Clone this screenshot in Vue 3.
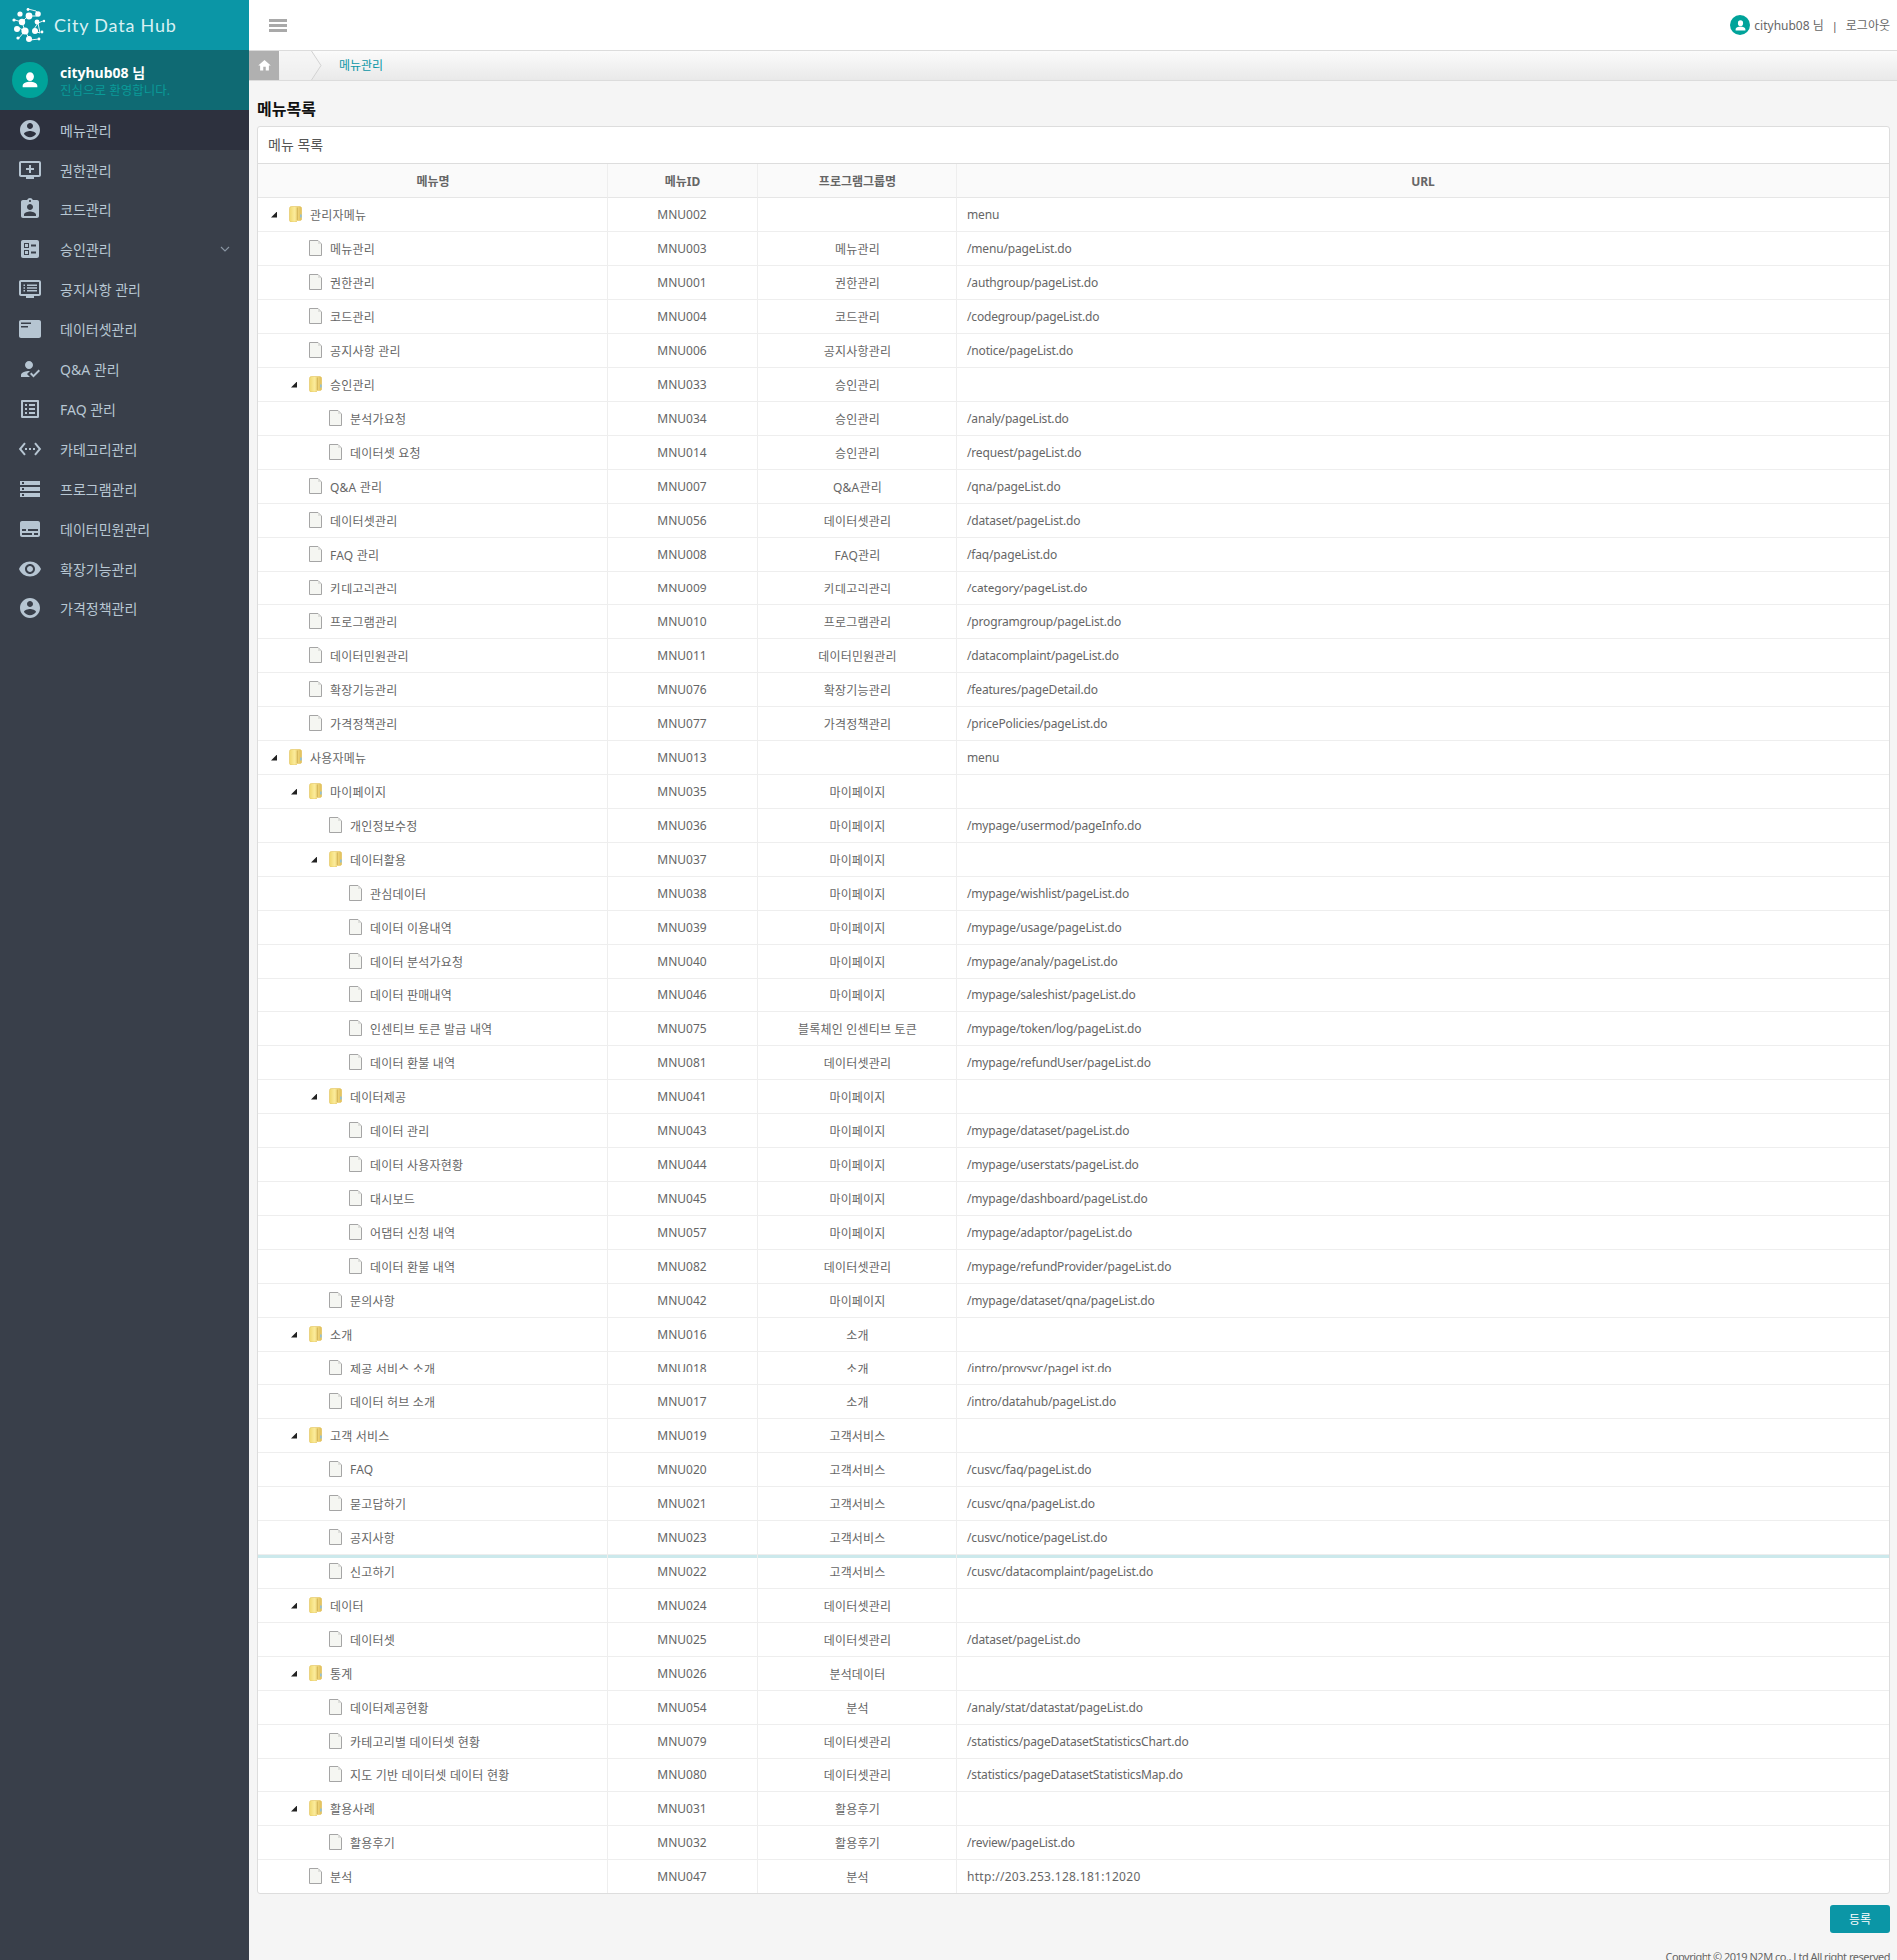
<template>
  <div class="layout">
    <!-- 사이드바 -->
    <aside class="sidebar">
      <div class="logo">
        <svg class="logo-mark" viewBox="0 0 36 36" width="36" height="36">
          <g stroke="#fff" stroke-width="1" fill="none" opacity=".9">
            <path d="M17 2 L25 4 L28 8 M4 13 L11 15 L17 9 L26 9 M8 21 L14 24 L19 33 L28 32 M23 22 L27 16 L32 14 M27 16 L29 26 L23 24 M11 15 L14 24 M7 32 L14 24" />
          </g>
          <g fill="#fff">
            <circle cx="17" cy="2.5" r="1.4" /><circle cx="9" cy="7" r="2.6" /><circle cx="18" cy="9" r="3.4" />
            <circle cx="27" cy="7" r="2.8" /><circle cx="3" cy="13" r="1.6" /><circle cx="11" cy="15" r="3.2" />
            <circle cx="26" cy="15" r="2.4" /><circle cx="33" cy="14" r="1.2" /><circle cx="6" cy="22" r="3" />
            <circle cx="14" cy="24" r="3.6" /><circle cx="24" cy="24" r="3" /><circle cx="31" cy="25" r="1.4" />
            <circle cx="7" cy="31" r="1.6" /><circle cx="18" cy="32" r="3" /><circle cx="28" cy="32" r="1.4" />
          </g>
        </svg>
        <span class="logo-text">City Data Hub</span>
      </div>
      <div class="user-panel">
        <span class="avatar">
          <svg viewBox="0 0 24 24" width="22" height="22"><path fill="#fff" d="M12 3.500a4.300 4.800 0 1 1 0 9.600a4.300 4.800 0 0 1 0-9.600zM4 20v-1.800c0-2.500 4.500-4.200 8-4.200s8 1.700 8 4.200V20z" /></svg>
        </span>
        <div class="user-info">
          <div class="user-name">cityhub08 님</div>
          <div class="user-welcome">진심으로 환영합니다.</div>
        </div>
      </div>
      <ul class="menu">
        <li v-for="(m, i) in menus" :key="m.label" class="menu-item" :class="{ active: i === 0 }">
          <svg class="menu-icon" viewBox="0 0 24 24" width="24" height="24"><path fill-rule="evenodd" :d="m.icon" /></svg>
          <span class="menu-label">{{ m.label }}</span>
          <svg v-if="m.sub" class="menu-arrow" viewBox="0 0 10 6" width="10" height="6"><path d="M1 1l4 4 4-4" fill="none" stroke="#8a96a3" stroke-width="1.100" /></svg>
        </li>
      </ul>
    </aside>

    <div class="main">
      <header class="topbar">
        <div class="burger"><i></i><i></i><i></i></div>
        <div class="top-user">
          <span class="avatar small">
            <svg viewBox="0 0 24 24" width="13" height="13"><path fill="#fff" d="M12 2.500a4.800 5.300 0 1 1 0 10.600a4.800 5.300 0 0 1 0-10.600zM3 21v-2.500c0-2.800 5-4.500 9-4.500s9 1.700 9 4.500V21z" /></svg>
          </span>
          <span class="top-name">cityhub08 님</span>
          <span class="top-sep">|</span>
          <span class="top-logout">로그아웃</span>
        </div>
      </header>

      <nav class="crumb">
        <span class="crumb-home">
          <svg viewBox="0 0 24 24" width="15" height="15"><path fill="#fff" d="M10 20v-6h4v6h5v-8h3L12 3 2 12h3v8z" /></svg>
        </span>
        <svg class="crumb-arrow" viewBox="0 0 42 29" width="42" height="29">
          <path fill="#f2f2f2" d="M0 0h32l9 14.500-9 14.500H0z" opacity=".55" />
          <path fill="none" stroke="#d2d2d2" d="M31.500 0l9.500 14.500-9.500 14.500" />
        </svg>
        <span class="crumb-current">메뉴관리</span>
      </nav>

      <section class="content">
        <h2 class="page-title">메뉴목록</h2>
        <div class="card">
          <div class="card-title">메뉴 목록</div>
          <table class="tree-table">
            <colgroup>
              <col style="width: 351px" />
              <col style="width: 150px" />
              <col style="width: 200px" />
              <col />
            </colgroup>
            <thead>
              <tr>
                <th>메뉴명</th>
                <th>메뉴ID</th>
                <th>프로그램그룹명</th>
                <th>URL</th>
              </tr>
            </thead>
            <tbody>
              <tr v-for="r in rows" :key="r.id + r.name" :class="{ hover: r.id === 'MNU022' }">
                <td>
                  <div class="tree-cell" :style="{ paddingLeft: 31 + r.level * 20 + 'px' }">
                    <template v-if="r.folder">
                      <i class="toggler"></i>
                      <svg class="node-icon" viewBox="0 0 13 16" width="13" height="16">
                        <defs>
                          <linearGradient id="fold" x1="0" x2="1" y1="0" y2="0">
                            <stop offset="0" stop-color="#f0d86e" />
                            <stop offset=".4" stop-color="#fbeb9a" />
                            <stop offset="1" stop-color="#e0bc55" />
                          </linearGradient>
                        </defs>
                        <path fill="url(#fold)" stroke="#e2c25e" stroke-width=".6" d="M.5 2.500C.5 1 1.500.5 2.500.5h7.500C11.500.5 12.700 1 12.700 2.500V13c0 1-1 1.500-2 1.500H8.500L7 16H2.500c-1.200 0-2-.6-2-2z" />
                        <path fill="#cfae50" d="M7.800 1.500h.9V14h-.9z" />
                        <path fill="#8fc0d8" d="M11 8.500h1.700v3H11z" />
                      </svg>
                    </template>
                    <svg v-else class="node-icon" viewBox="0 0 13 16" width="13" height="16">
                      <path fill="#f5f6f2" stroke="#a5a5a5" d="M.5.5h8.500l3.500 3.500v11.500H.5z" />
                      <path fill="#dfe0dc" d="M9 1l3 3H9z" />
                    </svg>
                    <span class="node-name">{{ r.name }}</span>
                  </div>
                </td>
                <td class="center id-cell">{{ r.id }}</td>
                <td class="center group">{{ r.group }}</td>
                <td class="url" :class="{ ext: r.url.startsWith('http') }">{{ r.url }}</td>
              </tr>
            </tbody>
          </table>
        </div>
        <div class="actions">
          <button class="btn" type="button">등록</button>
        </div>
        <footer class="copyright">Copyright © 2019 N2M co., Ltd All right reserved</footer>
      </section>
    </div>
  </div>
</template>

<script setup>
const person = 'M12 2C6.48 2 2 6.48 2 12s4.48 10 10 10 10-4.48 10-10S17.52 2 12 2zm0 3c1.66 0 3 1.34 3 3s-1.34 3-3 3-3-1.34-3-3 1.34-3 3-3zm0 14.200c-2.500 0-4.710-1.280-6-3.220.03-1.990 4-3.080 6-3.080 1.990 0 5.970 1.090 6 3.080-1.290 1.940-3.500 3.220-6 3.220z'

const menus = [
  { label: '메뉴관리', icon: person },
  { label: '권한관리', icon: 'M21 3H3c-1.110 0-2 .89-2 2v12c0 1.100.89 2 2 2h5v2h8v-2h5c1.100 0 1.990-.9 1.990-2L23 5c0-1.110-.9-2-2-2zm0 14H3V5h18v12zm-5-7v2h-3v3h-2v-3H8v-2h3V7h2v3h3z' },
  { label: '코드관리', icon: 'M19 3h-4.180C14.400 1.840 13.300 1 12 1c-1.300 0-2.400.84-2.820 2H5c-1.100 0-2 .9-2 2v14c0 1.100.9 2 2 2h14c1.100 0 2-.9 2-2V5c0-1.100-.9-2-2-2zm-7 0c.55 0 1 .45 1 1s-.45 1-1 1-1-.45-1-1 .45-1 1-1zm0 4c1.660 0 3 1.340 3 3s-1.340 3-3 3-3-1.340-3-3 1.340-3 3-3zm6 12H6v-1.400c0-2 4-3.100 6-3.100s6 1.100 6 3.100V19z' },
  { label: '승인관리', sub: true, icon: 'M19 3H5c-1.100 0-2 .9-2 2v14c0 1.100.9 2 2 2h14c1.100 0 2-.9 2-2V5c0-1.100-.9-2-2-2zM6 6v5h5V6zm1 1h3v3H7zM6 13v5h5v-5zm1 1h3v3H7zM13 7.500v2h5v-2zM13 14.500v2h5v-2z' },
  { label: '공지사항 관리', icon: 'M21 3H3c-1.100 0-2 .9-2 2v12c0 1.100.9 2 2 2h5v2h8v-2h5c1.100 0 2-.9 2-2V5c0-1.100-.9-2-2-2zM3 5h18v12H3zM5.500 7.500v1.500h1.500v-1.500zM9 7.500v1.500h10v-1.500zM5.500 10.300v1.500h1.500v-1.500zM9 10.300v1.500h10v-1.500zM5.500 13.100v1.500h1.500v-1.500zM9 13.100v1.500h10v-1.500z' },
  { label: '데이터셋관리', icon: 'M3 3h18c1.100 0 2 .9 2 2v14c0 1.100-.9 2-2 2H3c-1.100 0-2-.9-2-2V5c0-1.100.9-2 2-2zM3 5.500v1.500h10V5.500zM3 9v1.500h7V9z' },
  { label: 'Q&A 관리', icon: 'M9 17l3-2.940c-.39-.04-.68-.06-1-.06-2.670 0-8 1.340-8 4v2h9l-3-3zm2-5c2.210 0 4-1.790 4-4s-1.790-4-4-4-4 1.790-4 4 1.790 4 4 4zM15.470 20.500L12 17l1.400-1.410 2.070 2.080 5.130-5.170 1.400 1.410z' },
  { label: 'FAQ 관리', icon: 'M19 5v14H5V5h14m1.100-2H3.900c-.5 0-.9.4-.9.9v16.200c0 .4.4.9.9.9h16.200c.4 0 .9-.5.9-.9V3.900c0-.5-.5-.9-.9-.9zM11 7h6v2h-6V7zm0 4h6v2h-6v-2zm0 4h6v2h-6zM7 7h2v2H7zm0 4h2v2H7zm0 4h2v2H7z' },
  { label: '카테고리관리', icon: 'M7.770 6.760L6.230 5.480.82 12l5.410 6.520 1.540-1.280L3.420 12l4.350-5.240zM7 13h2v-2H7v2zm10-2h-2v2h2v-2zm-6 2h2v-2h-2v2zm6.770-7.520l-1.540 1.280L20.580 12l-4.350 5.240 1.540 1.280L23.180 12l-5.410-6.520z' },
  { label: '프로그램관리', icon: 'M2 20h20v-4H2v4zm2-3h2v2H4v-2zM2 4v4h20V4H2zm4 3H4V5h2v2zm-4 7h20v-4H2v4zm2-3h2v2H4v-2z' },
  { label: '데이터민원관리', icon: 'M20 4H4c-1.100 0-2 .9-2 2v12c0 1.100.9 2 2 2h16c1.100 0 2-.9 2-2V6c0-1.100-.9-2-2-2zM4 12h4v2H4v-2zm10 6H4v-2h10v2zm6 0h-4v-2h4v2zm0-4H10v-2h10v2z' },
  { label: '확장기능관리', icon: 'M12 4.500C7 4.500 2.730 7.610 1 12c1.730 4.390 6 7.500 11 7.500s9.270-3.110 11-7.500c-1.730-4.390-6-7.500-11-7.500zM12 17c-2.760 0-5-2.240-5-5s2.240-5 5-5 5 2.240 5 5-2.240 5-5 5zm0-8c-1.660 0-3 1.340-3 3s1.340 3 3 3 3-1.340 3-3-1.340-3-3-3z' },
  { label: '가격정책관리', icon: person }
]

// level, folder, name, id, group, url
const raw = [
  [0, 1, '관리자메뉴', '002', '', 'menu'],
  [1, 0, '메뉴관리', '003', '메뉴관리', '/menu/pageList.do'],
  [1, 0, '권한관리', '001', '권한관리', '/authgroup/pageList.do'],
  [1, 0, '코드관리', '004', '코드관리', '/codegroup/pageList.do'],
  [1, 0, '공지사항 관리', '006', '공지사항관리', '/notice/pageList.do'],
  [1, 1, '승인관리', '033', '승인관리', ''],
  [2, 0, '분석가요청', '034', '승인관리', '/analy/pageList.do'],
  [2, 0, '데이터셋 요청', '014', '승인관리', '/request/pageList.do'],
  [1, 0, 'Q&A 관리', '007', 'Q&A관리', '/qna/pageList.do'],
  [1, 0, '데이터셋관리', '056', '데이터셋관리', '/dataset/pageList.do'],
  [1, 0, 'FAQ 관리', '008', 'FAQ관리', '/faq/pageList.do'],
  [1, 0, '카테고리관리', '009', '카테고리관리', '/category/pageList.do'],
  [1, 0, '프로그램관리', '010', '프로그램관리', '/programgroup/pageList.do'],
  [1, 0, '데이터민원관리', '011', '데이터민원관리', '/datacomplaint/pageList.do'],
  [1, 0, '확장기능관리', '076', '확장기능관리', '/features/pageDetail.do'],
  [1, 0, '가격정책관리', '077', '가격정책관리', '/pricePolicies/pageList.do'],
  [0, 1, '사용자메뉴', '013', '', 'menu'],
  [1, 1, '마이페이지', '035', '마이페이지', ''],
  [2, 0, '개인정보수정', '036', '마이페이지', '/mypage/usermod/pageInfo.do'],
  [2, 1, '데이터활용', '037', '마이페이지', ''],
  [3, 0, '관심데이터', '038', '마이페이지', '/mypage/wishlist/pageList.do'],
  [3, 0, '데이터 이용내역', '039', '마이페이지', '/mypage/usage/pageList.do'],
  [3, 0, '데이터 분석가요청', '040', '마이페이지', '/mypage/analy/pageList.do'],
  [3, 0, '데이터 판매내역', '046', '마이페이지', '/mypage/saleshist/pageList.do'],
  [3, 0, '인센티브 토큰 발급 내역', '075', '블록체인 인센티브 토큰', '/mypage/token/log/pageList.do'],
  [3, 0, '데이터 환불 내역', '081', '데이터셋관리', '/mypage/refundUser/pageList.do'],
  [2, 1, '데이터제공', '041', '마이페이지', ''],
  [3, 0, '데이터 관리', '043', '마이페이지', '/mypage/dataset/pageList.do'],
  [3, 0, '데이터 사용자현황', '044', '마이페이지', '/mypage/userstats/pageList.do'],
  [3, 0, '대시보드', '045', '마이페이지', '/mypage/dashboard/pageList.do'],
  [3, 0, '어댑터 신청 내역', '057', '마이페이지', '/mypage/adaptor/pageList.do'],
  [3, 0, '데이터 환불 내역', '082', '데이터셋관리', '/mypage/refundProvider/pageList.do'],
  [2, 0, '문의사항', '042', '마이페이지', '/mypage/dataset/qna/pageList.do'],
  [1, 1, '소개', '016', '소개', ''],
  [2, 0, '제공 서비스 소개', '018', '소개', '/intro/provsvc/pageList.do'],
  [2, 0, '데이터 허브 소개', '017', '소개', '/intro/datahub/pageList.do'],
  [1, 1, '고객 서비스', '019', '고객서비스', ''],
  [2, 0, 'FAQ', '020', '고객서비스', '/cusvc/faq/pageList.do'],
  [2, 0, '묻고답하기', '021', '고객서비스', '/cusvc/qna/pageList.do'],
  [2, 0, '공지사항', '023', '고객서비스', '/cusvc/notice/pageList.do'],
  [2, 0, '신고하기', '022', '고객서비스', '/cusvc/datacomplaint/pageList.do'],
  [1, 1, '데이터', '024', '데이터셋관리', ''],
  [2, 0, '데이터셋', '025', '데이터셋관리', '/dataset/pageList.do'],
  [1, 1, '통계', '026', '분석데이터', ''],
  [2, 0, '데이터제공현황', '054', '분석', '/analy/stat/datastat/pageList.do'],
  [2, 0, '카테고리별 데이터셋 현황', '079', '데이터셋관리', '/statistics/pageDatasetStatisticsChart.do'],
  [2, 0, '지도 기반 데이터셋 데이터 현황', '080', '데이터셋관리', '/statistics/pageDatasetStatisticsMap.do'],
  [1, 1, '활용사례', '031', '활용후기', ''],
  [2, 0, '활용후기', '032', '활용후기', '/review/pageList.do'],
  [1, 0, '분석', '047', '분석', 'http://203.253.128.181:12020']
]

const rows = raw.map(([level, folder, name, id, group, url]) => ({
  level,
  folder: !!folder,
  name,
  id: 'MNU' + id,
  group,
  url
}))
</script>

<style scoped>
.layout {
  display: flex;
  height: 1965px;
  overflow: hidden;
  font-family: "Noto Sans", "Noto Sans CJK KR", sans-serif;
  font-size: 12px;
  color: #666;
}

/* sidebar */
.sidebar {
  width: 250px;
  flex: none;
  background: #393f4a;
}
.logo {
  height: 50px;
  display: flex;
  align-items: center;
  padding-left: 11px;
  gap: 7px;
  background: #0b96a6;
  box-sizing: border-box;
}
.logo-text {
  font-family: "Lato", sans-serif;
  font-size: 18px;
  letter-spacing: 0.8px;
  color: #d8f0f3;
}
.user-panel {
  height: 60px;
  display: flex;
  align-items: center;
  padding-left: 12px;
  gap: 12px;
  background: #0f6a73;
}
.avatar {
  width: 36px;
  height: 36px;
  border-radius: 50%;
  background: #00a39a;
  display: flex;
  align-items: center;
  justify-content: center;
  flex: none;
}
.avatar.small {
  width: 20px;
  height: 20px;
}
.user-name {
  font-size: 14px;
  font-weight: 700;
  color: #fff;
  line-height: 20px;
}
.user-welcome {
  font-size: 12.500px;
  color: #0a9a98;
  line-height: 15px;
}
.menu {
  list-style: none;
  margin: 0;
  padding: 0;
}
.menu-item {
  height: 40px;
  display: flex;
  align-items: center;
  padding-left: 18px;
  padding-right: 19px;
  gap: 18px;
  font-size: 14px;
  color: #b8c7d3;
}
.menu-item.active {
  background: #2d313e;
}
.menu-icon {
  flex: none;
  fill: #b6c5d2;
}
.menu-label {
  flex: 1;
}

/* top */
.main {
  flex: 1;
  min-width: 0;
  display: flex;
  flex-direction: column;
  background: #f5f5f5;
}
.topbar {
  height: 50px;
  flex: none;
  background: #fff;
  display: flex;
  align-items: center;
  justify-content: space-between;
  padding: 0 7px 0 20px;
  box-sizing: border-box;
}
.burger i {
  display: block;
  width: 18px;
  height: 3px;
  margin: 2px 0;
  background: #a9a9a9;
}
.top-user {
  display: flex;
  align-items: center;
  color: #666;
}
.top-name {
  margin-left: 4px;
}
.top-sep {
  margin: 0 8px 0 8px;
  color: #555;
  font-size: 11px;
}
.crumb {
  height: 31px;
  flex: none;
  display: flex;
  align-items: stretch;
  box-sizing: border-box;
  border-top: 1px solid #dcdcdc;
  border-bottom: 1px solid #dcdcdc;
  background: linear-gradient(#fbfbfb, #e9e9e9);
}
.crumb-home {
  width: 30px;
  background: #b0b0b0;
  display: flex;
  align-items: center;
  justify-content: center;
}
.crumb-arrow {
  margin-left: 1px;
}
.crumb-current {
  margin-left: 17px;
  line-height: 29px;
  color: #0b96a6;
}

/* content */
.content {
  flex: 1;
  padding: 0 7px 0 8px;
}
.page-title {
  margin: 18px 0 0;
  height: 27px;
  font-size: 16px;
  font-weight: 700;
  line-height: 20px;
  color: #111;
}
.card {
  background: #fff;
  border: 1px solid #ddd;
  border-radius: 3px;
}
.card-title {
  height: 36px;
  line-height: 36px;
  padding-left: 10px;
  font-size: 14px;
  color: #555;
  border-bottom: 1px solid #ddd;
}
.tree-table {
  width: 100%;
  table-layout: fixed;
  border-collapse: separate;
  border-spacing: 0;
}
.tree-table th {
  height: 34px;
  padding: 0;
  background: #fafafa;
  font-weight: 700;
  font-size: 12px;
  color: #666;
  border-right: 1px solid #eee;
  border-bottom: 1px solid #e6e6e6;
}
.tree-table td {
  height: 33px;
  padding: 0;
  border-right: 1px solid #eee;
  border-bottom: 1px solid #eee;
  white-space: nowrap;
}
.tree-table th:last-child,
.tree-table td:last-child {
  border-right: 0;
}
.tree-table tr:last-child td {
  border-bottom: 0;
}
.tree-table tr.hover td {
  box-shadow: inset 0 3px 0 #cce9ec;
}
.center {
  text-align: center;
}
.tree-table td.id-cell {
  padding-right: 1px;
}
.group,
.node-name {
  letter-spacing: 0.2px;
}
.tree-table td.url {
  padding-left: 10px;
  letter-spacing: -0.16px;
}
.tree-table td.url.ext {
  letter-spacing: 0.3px;
}
.tree-cell {
  display: flex;
  align-items: center;
  position: relative;
}
.toggler {
  position: absolute;
  margin-left: -18px;
  width: 6px;
  height: 6px;
  background: #222;
  clip-path: polygon(100% 0, 100% 100%, 0 100%);
}
.node-icon {
  flex: none;
  margin-right: 8px;
  margin-top: -1px;
}
.node-name {
  color: #666;
}
.actions {
  display: flex;
  justify-content: flex-end;
  margin-top: 11px;
}
.btn {
  width: 60px;
  height: 28px;
  border: 0;
  padding: 0;
  border-radius: 3px;
  background: #0b96a6;
  color: #fff;
  font: inherit;
}
.copyright {
  margin-top: 16px;
  text-align: right;
  font-size: 11px;
  letter-spacing: -0.5px;
  color: #666;
}
</style>

<style>
html, body {
  margin: 0;
  overflow: hidden;
}
</style>
